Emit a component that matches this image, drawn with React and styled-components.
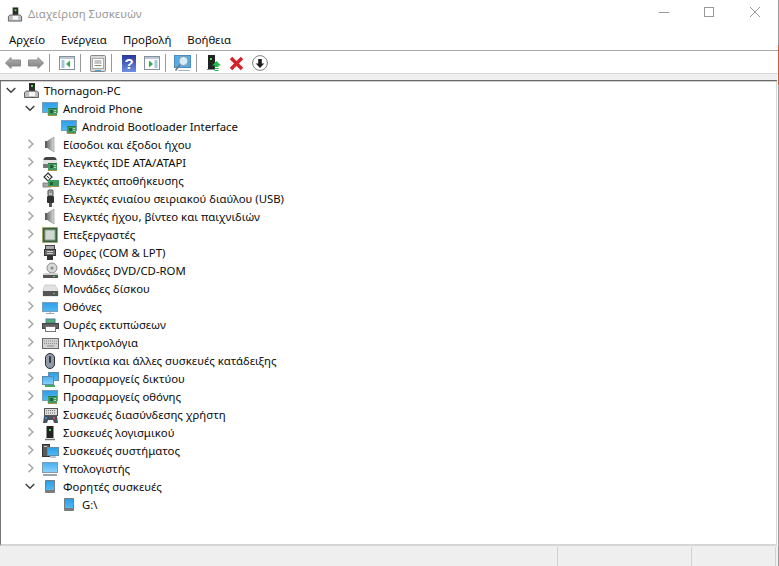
import React from "react";
import styled, { createGlobalStyle } from "styled-components";

const Global = createGlobalStyle`
  html, body { margin: 0; padding: 0; background: #fff; overflow: hidden; }
  * { box-sizing: border-box; }
`;

// shared gradients for the little device pictures
function Gradients() {
  return (
    <DefsSvg width="0" height="0">
      <defs>
        <linearGradient id="screen" x1="0" y1="0" x2="0" y2="1">
          <stop offset="0" stopColor="#2c9ee6" />
          <stop offset="1" stopColor="#4fb9f4" />
        </linearGradient>
        <linearGradient id="pale" x1="0" y1="0" x2="0" y2="1">
          <stop offset="0" stopColor="#45aef0" />
          <stop offset="1" stopColor="#8fd2f8" />
        </linearGradient>
        <linearGradient id="cone" x1="0" y1="0" x2="1" y2="0">
          <stop offset="0" stopColor="#777" />
          <stop offset="1" stopColor="#dcdcdc" />
        </linearGradient>
        <linearGradient id="nav" x1="0" y1="0" x2="0" y2="1">
          <stop offset="0" stopColor="#b4b4b4" />
          <stop offset="1" stopColor="#7c7c7c" />
        </linearGradient>
        <linearGradient id="help" x1="0" y1="0" x2="0" y2="1">
          <stop offset="0" stopColor="#27379c" />
          <stop offset="1" stopColor="#6e90e2" />
        </linearGradient>
      </defs>
    </DefsSvg>
  );
}

const Board = ({ x = 0, y = 0 }) => (
  <g transform={`translate(${x} ${y})`}>
    <rect x="0" y="0" width="9" height="8" fill="#3f9a5e" />
    <path d="M0 7.5h9" stroke="#a8914a" />
    <path d="M0 .5h9" stroke="#2c7446" />
    <rect x="2" y="2" width="3" height="3" fill="#25603c" />
    <path d="M6 2.5h2M6 4.5h2" stroke="#b5dcb8" />
  </g>
);

const Adapter = () => (
  <>
    <rect x="0.5" y="3.5" width="15" height="10" fill="url(#screen)" stroke="#7f9cb4" />
    <path d="M5 15h5" stroke="#a9b4bc" />
    <Board x={6} y={9} />
  </>
);

const Speaker = () => (
  <>
    <rect x="3" y="6" width="3" height="7" fill="#5e5e5e" />
    <path d="M5.5 6L12 2v15l-6.5-4z" fill="url(#cone)" stroke="#8a8a8a" strokeWidth="0.6" />
  </>
);

const Portable = () => (
  <>
    <rect x="3" y="3" width="10" height="13" rx="1" fill="#7b7b7b" />
    <rect x="4" y="4" width="8" height="9" fill="url(#screen)" />
  </>
);

const icons = {
  pc: (
    <>
      <rect x="6" y="2" width="6" height="8" fill="#2b2b2b" />
      <rect x="8" y="4" width="2" height="2" fill="#45d84a" />
      <path d="M1.5 16.5v-5l2-1.500h10l2 1.500v5z" fill="#c0c0c0" stroke="#5f5f5f" />
      <rect x="6" y="11" width="6" height="4" fill="#f6f6f6" />
    </>
  ),
  adapter: <Adapter />,
  sound: <Speaker />,
  ide: (
    <>
      <path d="M1 8l1-3 2-1h8l2 1 1 3z" fill="#444" />
      <rect x="1" y="7" width="14" height="4" fill="#e4e4e4" />
      <rect x="1" y="11" width="7" height="4" fill="#777" />
      <Board x={6} y={10} />
    </>
  ),
  storage: (
    <>
      <path d="M6 2l4 4-4 4-4-4z" fill="#f2f2f2" stroke="#333" strokeWidth="1.2" />
      <path d="M5 5l2 2" stroke="#333" />
      <rect x="1" y="12" width="8" height="4" fill="#aaa" stroke="#666" strokeWidth="0.7" />
      <rect x="6" y="9" width="11" height="7" fill="#3f9a5e" />
      <path d="M6 15.5h11" stroke="#a8914a" />
      <rect x="8" y="11" width="3" height="3" fill="#25603c" />
    </>
  ),
  usb: (
    <>
      <rect x="6" y="1" width="5" height="6" rx="1" fill="#bbb" stroke="#444" />
      <path d="M7.5 3h2" stroke="#444" />
      <rect x="5" y="7" width="7" height="7" rx="1" fill="#2f2f2f" />
      <rect x="7" y="14" width="3" height="4" fill="#555" />
    </>
  ),
  cpu: (
    <>
      <rect x="0.5" y="2.5" width="15" height="15" fill="#35603d" stroke="#b09a4a" strokeDasharray="1 1" />
      <rect x="1.5" y="3.5" width="13" height="13" fill="#35603d" />
      <rect x="3" y="5" width="10" height="10" fill="#cfd9cf" stroke="#8da08d" />
    </>
  ),
  port: (
    <>
      <rect x="3.5" y="2.5" width="9" height="4" fill="#aaa" stroke="#444" />
      <rect x="2.5" y="6.5" width="11" height="6" fill="#6a6a6a" stroke="#333" />
      <path d="M5 8.5h6M5 10.5h6" stroke="#d0d0d0" />
      <rect x="5" y="13" width="6" height="4" fill="#333" />
    </>
  ),
  dvd: (
    <>
      <circle cx="10" cy="7" r="5" fill="#d8d8d8" stroke="#8f8f8f" />
      <circle cx="10" cy="7" r="1.5" fill="#888" />
      <path d="M3 12h12l1 1v4H1v-4z" fill="#d0d0d0" />
      <rect x="1" y="14" width="15" height="3" fill="#555" />
      <rect x="11" y="15" width="2" height="1" fill="#45d84a" />
    </>
  ),
  disk: (
    <>
      <path d="M3 6h10l3 5v6H1v-6z" fill="#e2e2e2" stroke="#bbb" strokeWidth="0.6" />
      <rect x="1" y="12" width="15" height="5" fill="#555" />
      <rect x="11" y="14" width="2" height="1" fill="#45d84a" />
    </>
  ),
  monitor: (
    <>
      <rect x="0.5" y="5.5" width="15" height="9" fill="url(#screen)" stroke="#7f9cb4" />
      <path d="M8 14.5V16M4 16.5h8" stroke="#9aa6ae" />
    </>
  ),
  printer: (
    <>
      <rect x="4" y="4" width="9" height="4" fill="#54b06c" stroke="#4a7fa8" />
      <rect x="0.5" y="8.5" width="16" height="5" fill="#5f5f5f" stroke="#444" />
      <rect x="3.5" y="11.5" width="10" height="5" fill="#fff" stroke="#777" />
    </>
  ),
  keyboard: (
    <>
      <rect x="0.5" y="5.5" width="16" height="10" fill="#d2d2d2" stroke="#6a6a6a" />
      <path d="M2 8h13M2 10.5h13" stroke="#8f8f8f" strokeDasharray="1 1" />
      <path d="M5 13h7" stroke="#8f8f8f" />
    </>
  ),
  mouse: (
    <>
      <rect x="3.5" y="2.5" width="9" height="15" rx="4.5" fill="#8f9bab" stroke="#2f2f2f" />
      <rect x="7" y="5" width="2" height="7" rx="1" fill="#3a3a3a" />
    </>
  ),
  network: (
    <>
      <rect x="6.5" y="3.5" width="10" height="8" fill="url(#screen)" stroke="#5f8cad" />
      <rect x="0.5" y="7.5" width="11" height="8" fill="url(#pale)" stroke="#5f8cad" />
      <path d="M3 17h10" stroke="#43ad5a" strokeWidth="2" />
    </>
  ),
  hid: (
    <>
      <rect x="2.5" y="3.5" width="13" height="7" fill="#dcdcdc" stroke="#555" />
      <path d="M4 5.5h10M4 8h10" stroke="#777" strokeDasharray="1 1" />
      <path d="M1 18l1-7h13l1 7h-4l-1-3H6l-1 3z" fill="#4a5260" />
      <rect x="3" y="12" width="2" height="2" fill="#3b8fd8" />
      <rect x="11" y="12" width="2" height="2" fill="#d84a3b" />
    </>
  ),
  software: (
    <>
      <rect x="4.5" y="3" width="7" height="12" fill="#222" />
      <rect x="7" y="6" width="2" height="2" fill="#45d84a" />
      <path d="M3 16.5h10" stroke="#777" strokeWidth="1.5" />
    </>
  ),
  system: (
    <>
      <rect x="0.5" y="3.5" width="7" height="12" fill="#5a5a5a" stroke="#333" />
      <path d="M2 5.5h3" stroke="#cfcfcf" />
      <rect x="5.5" y="6.5" width="11" height="8" fill="url(#screen)" stroke="#5f8cad" />
      <path d="M8 16h6" stroke="#9aa6ae" strokeWidth="1.2" />
    </>
  ),
  computer: (
    <>
      <rect x="0.5" y="3.5" width="15" height="10" fill="url(#pale)" stroke="#7f9cb4" />
      <path d="M1 16h14" stroke="#9aa6ae" strokeWidth="2" />
    </>
  ),
  portable: <Portable />,
};

const tree = [
  { icon: "pc", label: "Thornagon-PC", depth: 0, arrow: "open" },
  { icon: "adapter", label: "Android Phone", depth: 1, arrow: "open" },
  { icon: "adapter", label: "Android Bootloader Interface", depth: 2 },
  { icon: "sound", label: "Είσοδοι και έξοδοι ήχου", depth: 1, arrow: "closed" },
  { icon: "ide", label: "Ελεγκτές IDE ATA/ATAPI", depth: 1, arrow: "closed" },
  { icon: "storage", label: "Ελεγκτές αποθήκευσης", depth: 1, arrow: "closed" },
  { icon: "usb", label: "Ελεγκτές ενιαίου σειριακού διαύλου (USB)", depth: 1, arrow: "closed" },
  { icon: "sound", label: "Ελεγκτές ήχου, βίντεο και παιχνιδιών", depth: 1, arrow: "closed" },
  { icon: "cpu", label: "Επεξεργαστές", depth: 1, arrow: "closed" },
  { icon: "port", label: "Θύρες (COM & LPT)", depth: 1, arrow: "closed" },
  { icon: "dvd", label: "Μονάδες DVD/CD-ROM", depth: 1, arrow: "closed" },
  { icon: "disk", label: "Μονάδες δίσκου", depth: 1, arrow: "closed" },
  { icon: "monitor", label: "Οθόνες", depth: 1, arrow: "closed" },
  { icon: "printer", label: "Ουρές εκτυπώσεων", depth: 1, arrow: "closed" },
  { icon: "keyboard", label: "Πληκτρολόγια", depth: 1, arrow: "closed" },
  { icon: "mouse", label: "Ποντίκια και άλλες συσκευές κατάδειξης", depth: 1, arrow: "closed" },
  { icon: "network", label: "Προσαρμογείς δικτύου", depth: 1, arrow: "closed" },
  { icon: "adapter", label: "Προσαρμογείς οθόνης", depth: 1, arrow: "closed" },
  { icon: "hid", label: "Συσκευές διασύνδεσης χρήστη", depth: 1, arrow: "closed" },
  { icon: "software", label: "Συσκευές λογισμικού", depth: 1, arrow: "closed" },
  { icon: "system", label: "Συσκευές συστήματος", depth: 1, arrow: "closed" },
  { icon: "computer", label: "Υπολογιστής", depth: 1, arrow: "closed" },
  { icon: "portable", label: "Φορητές συσκευές", depth: 1, arrow: "open" },
  { icon: "portable", label: "G:\\", depth: 2 },
];

function Arrow({ kind }) {
  if (!kind) return <ArrowBox />;
  return (
    <ArrowBox>
      {kind === "open" ? (
        <svg width="10" height="10" viewBox="0 0 10 10">
          <path d="M.7 3L5 7.3 9.3 3" fill="none" stroke="#404040" strokeWidth="1.5" />
        </svg>
      ) : (
        <svg width="10" height="10" viewBox="0 0 10 10">
          <path d="M3.5 .7L7.8 5 3.5 9.3" fill="none" stroke="#a6a6a6" strokeWidth="1.5" />
        </svg>
      )}
    </ArrowBox>
  );
}

function NavArrow({ flip }) {
  return (
    <FlipSvg $flip={flip} width="16" height="12" viewBox="0 0 16 12">
      <path d="M.5 6L6 .5V3h9.5v6H6v2.500z" fill="url(#nav)" stroke="#8a8a8a" />
    </FlipSvg>
  );
}

function PaneIcon({ side }) {
  return (
    <svg width="16" height="14" viewBox="0 0 16 14">
      <rect x="0.5" y="0.5" width="15" height="13" fill="#fff" stroke="#84909a" />
      <rect x="1" y="1" width="14" height="2" fill="#bcc8d2" />
      {side === "left" ? (
        <>
          <path d="M2.5 5h3M2.5 7h3M2.5 9h3M2.5 11h3" stroke="#4f8fc0" />
          <path d="M7 8l4-3.500v7z" fill="#2fae4a" />
        </>
      ) : (
        <>
          <path d="M10.5 5h3M10.5 7h3M10.5 9h3M10.5 11h3" stroke="#4f8fc0" />
          <path d="M9 8L5 4.500v7z" fill="#2fae4a" />
        </>
      )}
    </svg>
  );
}

export default function App() {
  return (
    <Window>
      <Global />
      <Gradients />
      <EdgeAccent />
      <TitleBar>
        <svg width="16" height="17" viewBox="0 1 17 17">{icons.pc}</svg>
        <Title>Διαχείριση Συσκευών</Title>
        <WinButtons>
          <WinButton>
            <svg width="10" height="10" viewBox="0 0 10 10"><path d="M0 5.5h10" stroke="#999" /></svg>
          </WinButton>
          <WinButton>
            <svg width="10" height="10" viewBox="0 0 10 10"><rect x="0.5" y="0.5" width="9" height="9" fill="none" stroke="#999" /></svg>
          </WinButton>
          <WinButton>
            <svg width="10" height="10" viewBox="0 0 10 10"><path d="M0 0l10 10M10 0L0 10" stroke="#999" /></svg>
          </WinButton>
        </WinButtons>
      </TitleBar>
      <MenuBar>
        <MenuItem>Αρχείο</MenuItem>
        <MenuItem>Ενέργεια</MenuItem>
        <MenuItem>Προβολή</MenuItem>
        <MenuItem>Βοήθεια</MenuItem>
      </MenuBar>
      <ToolBar>
        <ToolButton><NavArrow /></ToolButton>
        <ToolButton><NavArrow flip /></ToolButton>
        <Separator />
        <ToolButton><PaneIcon side="left" /></ToolButton>
        <Separator />
        <ToolButton>
          <svg width="16" height="17" viewBox="0 0 16 17">
            <rect x="0.5" y="0.5" width="15" height="16" rx="1" fill="#d8d8d8" stroke="#8a8a8a" />
            <rect x="2.5" y="3.5" width="11" height="10" fill="#fff" stroke="#a8a8a8" />
            <path d="M4.5 6h7M4.5 8h7M4.5 10.5h7" stroke="#8a8a8a" />
            <path d="M5 15.5h6" stroke="#3fa0dc" />
          </svg>
        </ToolButton>
        <Separator />
        <ToolButton>
          <svg width="14" height="17" viewBox="0 0 14 17">
            <rect x="0" y="0" width="14" height="17" fill="url(#help)" />
            <text x="7" y="14" textAnchor="middle" fontSize="15" fontWeight="700" fontFamily="Liberation Sans" fill="#fff">?</text>
          </svg>
        </ToolButton>
        <ToolButton><PaneIcon side="right" /></ToolButton>
        <Separator />
        <ToolButton>
          <svg width="17" height="17" viewBox="0 0 17 17">
            <rect x="0.5" y="0.5" width="16" height="12" fill="#55ace6" stroke="#4d8bb8" />
            <path d="M4 15.5h12" stroke="#aab4bc" />
            <circle cx="9.5" cy="6" r="4.5" fill="#d6ecf9" stroke="#8a949c" />
            <path d="M6 9.5L1.5 15.5" stroke="#70787e" strokeWidth="1.5" />
          </svg>
        </ToolButton>
        <Separator />
        <ToolButton>
          <svg width="14" height="17" viewBox="0 0 14 17">
            <rect x="1" y="0" width="7" height="14" fill="#222" />
            <rect x="3" y="3" width="2" height="2" fill="#45d84a" />
            <path d="M0 14h8v1H0z" fill="#888" />
            <path d="M9.5 6L14 10.500h-2.500V12h-4v-1.500H5z" fill="#22b84a" />
            <path d="M7.5 13h4v1h-4zM7.5 15h4v1h-4z" fill="#22b84a" />
          </svg>
        </ToolButton>
        <ToolButton>
          <svg width="15" height="15" viewBox="0 0 15 15">
            <path d="M2 2l11 11M13 2L2 13" stroke="#d6202a" strokeWidth="3.4" />
          </svg>
        </ToolButton>
        <ToolButton>
          <svg width="16" height="16" viewBox="0 0 16 16">
            <circle cx="8" cy="8" r="7.4" fill="#fff" stroke="#808080" />
            <path d="M8 13L3.8 8.500h2.400V4h3.600v4.500h2.400z" fill="#1c1c1c" />
          </svg>
        </ToolButton>
      </ToolBar>
      <GrayBand />
      <TreePane>
        {tree.map((row) => (
          <Row key={row.label + row.depth} $depth={row.depth}>
            <Arrow kind={row.arrow} />
            <IconBox viewBox="0 0 17 18" width="17" height="18">
              {icons[row.icon]}
            </IconBox>
            <Label>{row.label}</Label>
          </Row>
        ))}
      </TreePane>
      <StatusBar>
        <StatusCell $grow />
        <StatusCell $width="134px" />
        <StatusCell $width="84px" />
      </StatusBar>
    </Window>
  );
}

const DefsSvg = styled.svg`
  display: block;
  height: 0;
`;

const FlipSvg = styled.svg`
  transform: ${(p) => (p.$flip ? "scaleX(-1)" : "none")};
`;

const Window = styled.div`
  position: relative;
  width: 779px;
  height: 566px;
  display: flex;
  flex-direction: column;
  background: #fff;
  font-family: "Noto Sans", "Open Sans", sans-serif;
  font-size: 11.35px;
  color: #0c0c0c;
  border-right: 1px solid #9c9c9c;
`;

const EdgeAccent = styled.div`
  position: absolute;
  top: 45px;
  right: -1px;
  width: 1px;
  height: 40px;
  background: #c2603c;
`;

const TitleBar = styled.div`
  height: 28px;
  display: flex;
  align-items: center;
  padding-left: 7px;
`;

const Title = styled.div`
  margin-left: 5px;
  color: #999;
  margin-top: -1px;
`;

const WinButtons = styled.div`
  margin-left: auto;
  display: flex;
  margin-top: -4px;
`;

const WinButton = styled.div`
  width: 46px;
  height: 24px;
  display: grid;
  place-items: center;

  &:first-child {
    padding-left: 2px;
  }
`;

const MenuBar = styled.div`
  height: 23px;
  display: flex;
  align-items: center;
  gap: 16px;
  padding-left: 9px;
  border-bottom: 1px solid #a9a9a9;
`;

const MenuItem = styled.div``;

const ToolBar = styled.div`
  height: 23px;
  display: flex;
  align-items: center;
  padding: 2px 0 0 1px;
  border-bottom: 1px solid #d9d9d9;
`;

const ToolButton = styled.div`
  width: 23px;
  height: 20px;
  display: grid;
  place-items: center;
`;

const Separator = styled.div`
  width: 1px;
  height: 18px;
  background: #999;
  margin: 0 5px 0 2px;
`;

const GrayBand = styled.div`
  height: 7px;
  background: #efefef;
  border-bottom: 1px solid #696969;
  margin-right: 1px;
`;

const TreePane = styled.div`
  flex: 1;
  margin-right: 1px;
  border-left: 1px solid #777;
  border-right: 1px solid #d5d5d5;
  border-bottom: 2px solid #d5d5d5;
  box-shadow: inset 0 1px 0 #cfcfcf;
`;

const Row = styled.div`
  height: 18px;
  display: flex;
  align-items: center;
  padding-left: ${(p) => [5, 24, 43][p.$depth]}px;
`;

const ArrowBox = styled.div`
  width: 10px;
  height: 10px;
  display: grid;
  place-items: center;
`;

const IconBox = styled.svg`
  margin-left: 7px;
  flex-shrink: 0;
`;

const Label = styled.span`
  margin-left: 4px;
  white-space: nowrap;
`;

const StatusBar = styled.div`
  height: 20px;
  display: flex;
  background: #efefef;
  padding: 1px 2px 0 0;
`;

const StatusCell = styled.div`
  flex: ${(p) => (p.$grow ? 1 : "none")};
  width: ${(p) => p.$width || "auto"};
  border-right: 1px solid #d2d2d2;
`;
